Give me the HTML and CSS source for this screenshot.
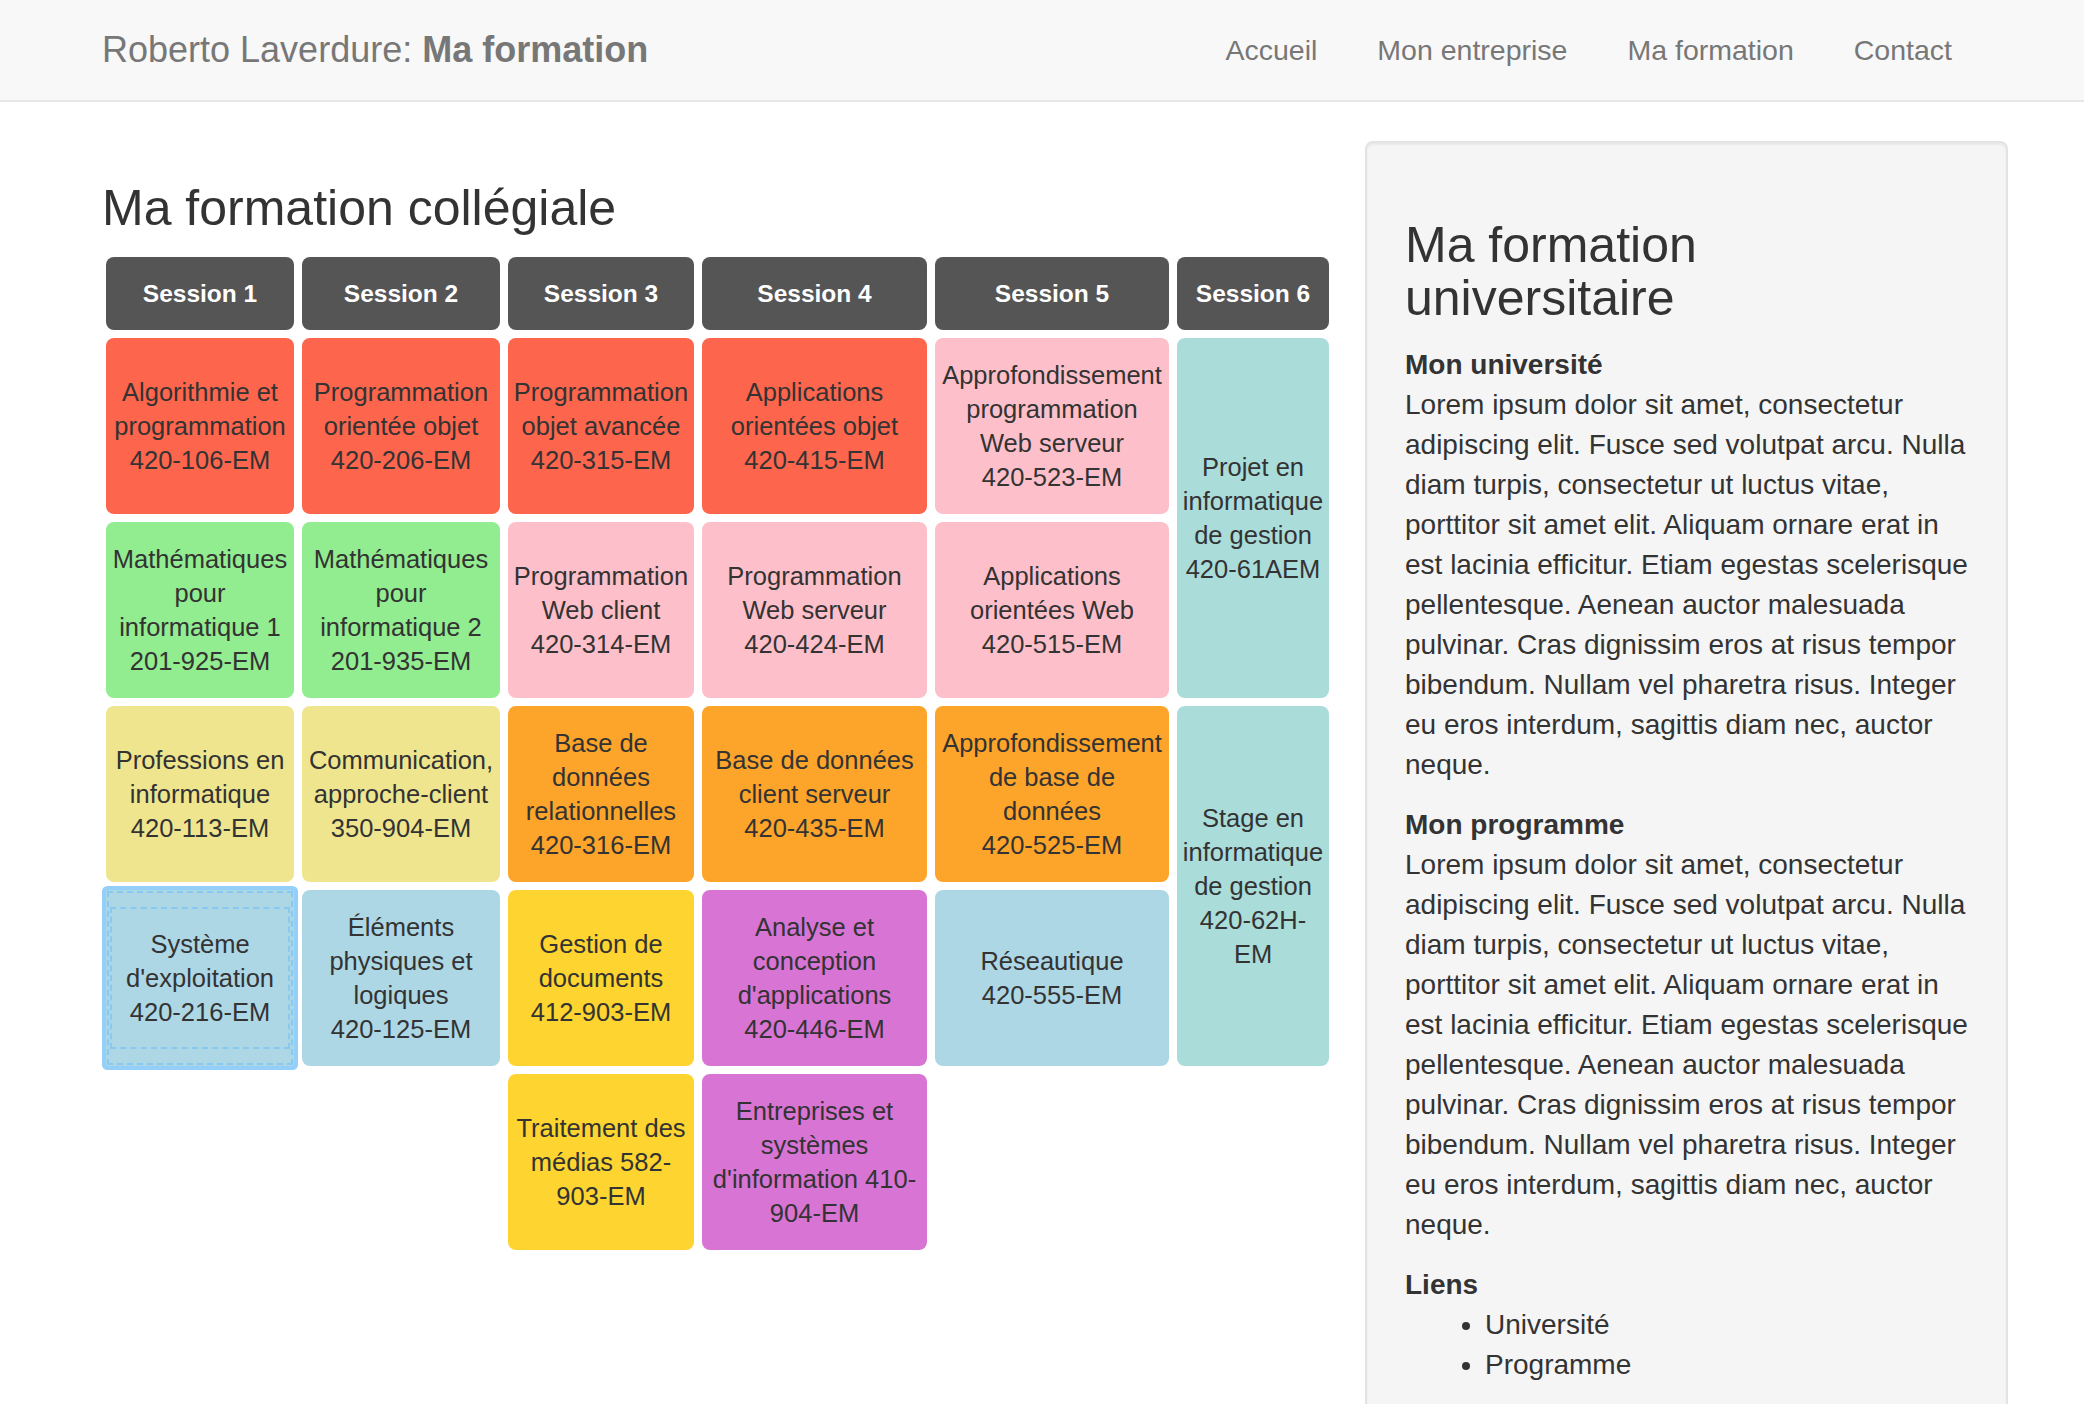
FILE: index.html
```html
<!DOCTYPE html>
<html lang="fr">
<head>
<meta charset="utf-8">
<title>Roberto Laverdure: Ma formation</title>
<link rel="stylesheet" href="styles.css">
</head>
<body>
<header class="navbar">
  <div class="nav-container">
    <a class="brand" href="#">Roberto Laverdure: <strong>Ma formation</strong></a>
    <ul class="nav-links">
      <li><a href="#">Accueil</a></li>
      <li><a href="#">Mon entreprise</a></li>
      <li><a href="#">Ma formation</a></li>
      <li><a href="#">Contact</a></li>
    </ul>
  </div>
</header>

<main class="container">
  <section class="col-main">
    <h3 class="page-title">Ma formation collégiale</h3>
    <div class="program">
      <div class="cell head">Session 1</div>
      <div class="cell head">Session 2</div>
      <div class="cell head">Session 3</div>
      <div class="cell head">Session 4</div>
      <div class="cell head">Session 5</div>
      <div class="cell head">Session 6</div>

      <div class="cell red">Algorithmie et programmation<br>420-106-EM</div>
      <div class="cell red">Programmation orientée objet<br>420-206-EM</div>
      <div class="cell red">Programmation objet avancée<br>420-315-EM</div>
      <div class="cell red">Applications orientées objet<br>420-415-EM</div>
      <div class="cell pink">Approfondissement programmation Web serveur<br>420-523-EM</div>
      <div class="cell teal tall">Projet en informatique de gestion<br>420-61AEM</div>

      <div class="cell green">Mathématiques pour informatique 1<br>201-925-EM</div>
      <div class="cell green">Mathématiques pour informatique 2<br>201-935-EM</div>
      <div class="cell pink">Programmation Web client<br>420-314-EM</div>
      <div class="cell pink">Programmation Web serveur<br>420-424-EM</div>
      <div class="cell pink">Applications orientées Web<br>420-515-EM</div>

      <div class="cell khaki">Professions en informatique<br>420-113-EM</div>
      <div class="cell khaki">Communication, approche-client<br>350-904-EM</div>
      <div class="cell orange">Base de données relationnelles<br>420-316-EM</div>
      <div class="cell orange">Base de données client serveur<br>420-435-EM</div>
      <div class="cell orange">Approfondissement de base de données<br>420-525-EM</div>
      <div class="cell teal tall">Stage en informatique de gestion<br>420-62H-EM</div>

      <div class="cell blue selected">Système d'exploitation<br>420-216-EM</div>
      <div class="cell blue">Éléments physiques et logiques<br>420-125-EM</div>
      <div class="cell gold">Gestion de documents<br>412-903-EM</div>
      <div class="cell orchid">Analyse et conception d'applications<br>420-446-EM</div>
      <div class="cell blue">Réseautique<br>420-555-EM</div>

      <div class="cell gold col3">Traitement des médias 582-<wbr>903-EM</div>
      <div class="cell orchid">Entreprises et systèmes d'information 410-<wbr>904-EM</div>
    </div>
  </section>

  <aside class="well">
    <h3 class="well-title">Ma formation universitaire</h3>
    <h4 class="sub">Mon université</h4>
    <p>Lorem ipsum dolor sit amet, consectetur adipiscing elit. Fusce sed volutpat arcu. Nulla diam turpis, consectetur ut luctus vitae, porttitor sit amet elit. Aliquam ornare erat in est lacinia efficitur. Etiam egestas scelerisque pellentesque. Aenean auctor malesuada pulvinar. Cras dignissim eros at risus tempor bibendum. Nullam vel pharetra risus. Integer eu eros interdum, sagittis diam nec, auctor neque.</p>
    <h4 class="sub">Mon programme</h4>
    <p>Lorem ipsum dolor sit amet, consectetur adipiscing elit. Fusce sed volutpat arcu. Nulla diam turpis, consectetur ut luctus vitae, porttitor sit amet elit. Aliquam ornare erat in est lacinia efficitur. Etiam egestas scelerisque pellentesque. Aenean auctor malesuada pulvinar. Cras dignissim eros at risus tempor bibendum. Nullam vel pharetra risus. Integer eu eros interdum, sagittis diam nec, auctor neque.</p>
    <h4 class="sub">Liens</h4>
    <ul class="links">
      <li>Université</li>
      <li>Programme</li>
    </ul>
  </aside>
</main>
</body>
</html>
```
FILE: styles.css
```css
* {
  box-sizing: border-box;
}

html, body {
  margin: 0;
  padding: 0;
}

body {
  font-family: "Liberation Sans", Arial, Helvetica, sans-serif;
  font-size: 28px;
  line-height: 40px;
  color: #333;
  background: #fff;
}

a {
  text-decoration: none;
  color: inherit;
}

/* ---------- Navbar ---------- */
.navbar {
  background: #f8f8f8;
  border-bottom: 2px solid #e7e7e7;
  margin-bottom: 39px;
}

.nav-container {
  width: 1940px;
  margin: 0 auto;
  padding: 0 30px;
  display: flex;
  justify-content: space-between;
  align-items: flex-start;
}

.brand {
  display: block;
  margin-left: -30px;
  padding: 30px;
  font-size: 36px;
  line-height: 40px;
  color: #777;
}

.brand strong {
  font-weight: bold;
}

.nav-links {
  display: flex;
  list-style: none;
  margin: 0;
  padding: 0;
}

.nav-links a {
  display: block;
  padding: 30px;
  font-size: 28.5px;
  line-height: 40px;
  color: #777;
}

/* ---------- Main layout ---------- */
.container {
  width: 1940px;
  margin: 0 auto;
  display: flex;
  align-items: flex-start;
}

.col-main {
  width: 1293px;
  padding: 0 30px;
  flex: none;
}

.page-title {
  font-size: 50px;
  font-weight: normal;
  line-height: 53px;
  margin: 41px 0 18px;
  color: #333;
}

/* ---------- Program grid ---------- */
.program {
  display: grid;
  grid-template-columns: 188px 198px 186px 225px 234px 152px;
  grid-template-rows: 73px repeat(5, 176px);
  gap: 8px;
  padding: 4px;
  width: 1233px;
}

.cell {
  position: relative;
  display: flex;
  align-items: center;
  justify-content: center;
  text-align: center;
  border-radius: 8px;
  padding: 0 5px;
  font-size: 25.5px;
  line-height: 34px;
  color: #333;
}

.cell.head {
  background: #555;
  color: #fff;
  font-weight: bold;
  font-size: 24.5px;
}

.cell.tall {
  grid-row: span 2;
}

.cell.col3 {
  grid-column: 3;
}

.red { background: #fd654d; }
.pink { background: #fdc0ca; }
.green { background: #92ec90; }
.khaki { background: #efe58f; }
.orange { background: #fda42a; }
.gold { background: #fed530; }
.orchid { background: #d874d4; }
.blue { background: #add7e5; }
.teal { background: #aadcda; }

.cell.selected {
  border-radius: 2px;
  box-shadow: 0 0 0 4px #93cff8;
}

.cell.selected::before {
  content: "";
  position: absolute;
  top: 1px;
  left: 1px;
  right: 1px;
  bottom: 1px;
  border: 2px dashed #88c9f2;
}

.cell.selected::after {
  content: "";
  position: absolute;
  top: 17px;
  bottom: 17px;
  left: 4px;
  right: 4px;
  border: 2px dashed #88c9f2;
}

/* ---------- Well ---------- */
.well {
  width: 643px;
  flex: none;
  background: #f5f5f5;
  border: 2px solid #e3e3e3;
  border-radius: 8px;
  box-shadow: inset 0 2px 2px rgba(0, 0, 0, 0.05);
  padding: 38px;
  margin-bottom: 40px;
}

.well-title {
  font-size: 50px;
  font-weight: normal;
  line-height: 53px;
  margin: 38px 0 20px;
  color: #333;
}

.sub {
  font-size: 28px;
  font-weight: bold;
  line-height: 40px;
  margin: 0;
  color: #333;
}

.well p {
  margin: 0 0 20px;
}

.links {
  margin: 0 0 20px;
  padding-left: 80px;
}
```
